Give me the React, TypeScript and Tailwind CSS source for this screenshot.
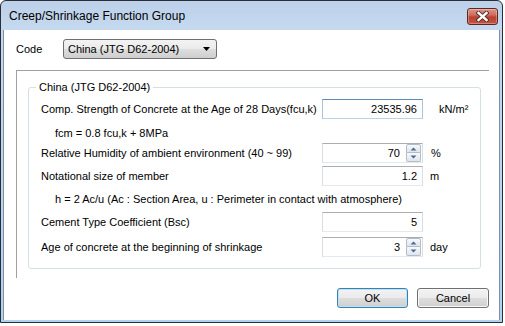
import React from "react";

const btnGrad =
  "bg-[linear-gradient(to_bottom,#f3f3f3_0%,#ebebeb_48%,#dddddd_52%,#cfcfcf_100%)]";

function CloseButton() {
  return (
    <div className="w-[31px] h-[17px] rounded-[3px] border border-[#5e2620] bg-[linear-gradient(to_bottom,#dc9488_0%,#cd6c5e_40%,#b9402f_55%,#c45545_100%)] shadow-[inset_0_0_0_1px_rgba(255,255,255,0.3)] flex items-center justify-center">
      <svg width="13" height="11" viewBox="0 0 13 11">
        <path d="M2.5 2 L10.5 9 M10.5 2 L2.5 9" stroke="#4a2520" strokeWidth="4.2" strokeLinecap="square" />
        <path d="M2.5 2 L10.5 9 M10.5 2 L2.5 9" stroke="#ffffff" strokeWidth="2.4" strokeLinecap="square" />
      </svg>
    </div>
  );
}

function SpinButtons() {
  return (
    <div className="flex flex-col w-[15px] h-[18px]">
      <div className="h-[9px] flex items-center justify-center border border-[#b4bcc8] rounded-t-[2px] bg-[linear-gradient(to_bottom,#f7f9fc,#dfe5ee)]">
        <svg width="7" height="4" viewBox="0 0 7 4">
          <path d="M0.5 3.5 L3.5 0.5 L6.5 3.5 Z" fill="#4d6b91" />
        </svg>
      </div>
      <div className="h-[9px] flex items-center justify-center border border-t-0 border-[#b4bcc8] rounded-b-[2px] bg-[linear-gradient(to_bottom,#f7f9fc,#dfe5ee)]">
        <svg width="7" height="4" viewBox="0 0 7 4">
          <path d="M0.5 0.5 L3.5 3.5 L6.5 0.5 Z" fill="#4d6b91" />
        </svg>
      </div>
    </div>
  );
}

const grayBox =
  "w-[101px] h-[20px] bg-white border border-t-[#abadb3] border-x-[#d9dde4] border-b-[#e3e9ef] flex items-center";
const blueBox =
  "w-[101px] h-[20px] bg-white border border-t-[#5a8ab5] border-x-[#a9c4dc] border-b-[#b9d3e8] flex items-center";

function TextRow({ children, className }: { children: React.ReactNode; className?: string }) {
  return <div className={"h-[20px] flex items-center " + (className ?? "")}>{children}</div>;
}

export default function App() {
  return (
    <div className="w-[505px] h-[326px] bg-white font-['Liberation_Sans',Arial,sans-serif] text-[11px] leading-[14px] text-black">
      <div className="w-[503px] h-[323px] flex flex-col rounded-t-[6px] border border-[#2a2e33] bg-[linear-gradient(to_bottom,#bcd1ea_0%,#c4d8ee_8%,#b1d3f2_100%)]">
        <div className="h-[29px] shrink-0 flex items-center pt-[1px] pl-[8px] pr-[4px]">
          <span className="flex-1 text-[12px] leading-[16px]">Creep/Shrinkage Function Group</span>
          <CloseButton />
        </div>
        <div className="flex-1 mx-[2px] mb-[2px] bg-white border-x border-[#7d90a6] flex flex-col">
          {/* Code row */}
          <div className="mt-[9px] pl-[12px] flex items-center">
            <span className="w-[47px]">Code</span>
            <div className={"w-[154px] h-[20px] rounded-[3px] border border-[#707070] flex items-center justify-between pl-[4px] pr-[6px] " + btnGrad}>
              <span>China (JTG D62-2004)</span>
              <svg width="7" height="4" viewBox="0 0 7 4">
                <path d="M0 0 L7 0 L3.5 4 Z" fill="#000" />
              </svg>
            </div>
          </div>

          {/* Panel */}
          <div className="mt-[11px] ml-[12px] w-[473px] h-[208px] border-t border-l border-[#a0a0a0] pl-[11px]">
            <fieldset className="mt-[9px] w-[453px] border border-[#d5dfe5] rounded-[3px] p-0 m-0">
              <legend className="ml-[7px] px-[3px] leading-[14px]">China (JTG D62-2004)</legend>
              <div className="pl-[12px] pt-[5px] pb-[11px] flex flex-col">
                <TextRow>
                  <span className="w-[281px]">Comp. Strength of Concrete at the Age of 28 Days(fcu,k)</span>
                  <div className={blueBox}>
                    <span className="flex-1 text-right pr-[5px]">23535.96</span>
                  </div>
                  <span className="ml-[16px]">kN/m²</span>
                </TextRow>
                <TextRow className="mt-[4px] pl-[14px]">fcm = 0.8 fcu,k + 8MPa</TextRow>
                <TextRow>
                  <span className="w-[281px]">Relative Humidity of ambient environment (40 ~ 99)</span>
                  <div className={grayBox + " pr-[1px]"}>
                    <span className="flex-1 text-right pr-[6px]">70</span>
                    <SpinButtons />
                  </div>
                  <span className="ml-[8px]">%</span>
                </TextRow>
                <TextRow className="mt-[3px]">
                  <span className="w-[281px]">Notational size of member</span>
                  <div className={grayBox}>
                    <span className="flex-1 text-right pr-[5px]">1.2</span>
                  </div>
                  <span className="ml-[7px]">m</span>
                </TextRow>
                <TextRow className="mt-[3px] pl-[14px]">
                  h = 2 Ac/u (Ac : Section Area, u : Perimeter in contact with atmosphere)
                </TextRow>
                <TextRow className="mt-[3px]">
                  <span className="w-[281px]">Cement Type Coefficient (Bsc)</span>
                  <div className={grayBox}>
                    <span className="flex-1 text-right pr-[5px]">5</span>
                  </div>
                </TextRow>
                <TextRow className="mt-[5px]">
                  <span className="w-[281px]">Age of concrete at the beginning of shrinkage</span>
                  <div className={grayBox + " pr-[1px]"}>
                    <span className="flex-1 text-right pr-[6px]">3</span>
                    <SpinButtons />
                  </div>
                  <span className="ml-[7px]">day</span>
                </TextRow>
              </div>
            </fieldset>
          </div>

          {/* Buttons */}
          <div className="mt-[10px] flex justify-end gap-[9px] pr-[10px]">
            <div className={"w-[71px] h-[20px] rounded-[3px] border border-[#3c7fb1] shadow-[inset_0_0_0_1px_#b8e4f8] flex items-center justify-center " + btnGrad}>
              OK
            </div>
            <div className={"w-[72px] h-[20px] rounded-[3px] border border-[#707070] shadow-[inset_0_0_0_1px_#f8f8f8] flex items-center justify-center " + btnGrad}>
              Cancel
            </div>
          </div>
        </div>
      </div>
    </div>
  );
}
